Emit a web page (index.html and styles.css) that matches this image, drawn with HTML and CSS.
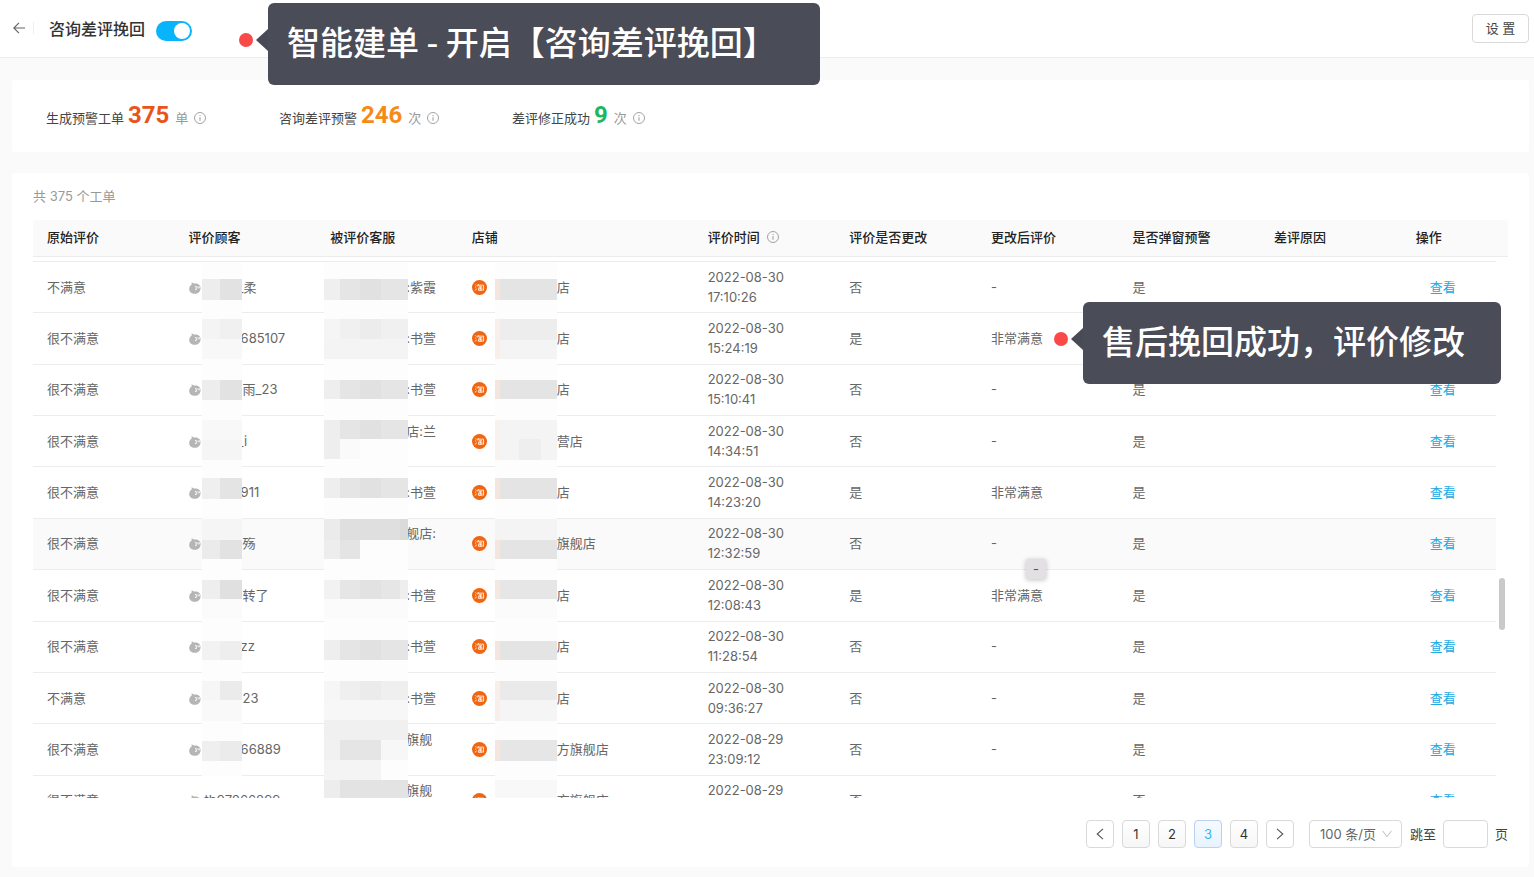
FILE: index.html
```html
<!DOCTYPE html>
<html lang="zh-CN">
<head>
<meta charset="utf-8">
<title>咨询差评挽回</title>
<link rel="stylesheet" href="styles.css">
</head>
<body>
<svg class="defs" aria-hidden="true">
  <symbol id="info" viewBox="0 0 12 12"><circle cx="6" cy="6" r="5.5" fill="none" stroke="currentColor" stroke-width=".9"/><path d="M6 5.2v3.600M6 3v1.100" stroke="currentColor" stroke-width="1"/></symbol>
  <symbol id="ww" viewBox="0 0 12 12"><path d="M2.600.2 5 1.600c3.200-.8 6.600 1 6.600 4.300 0 3.600-2.600 5.800-5.800 5.800C2.500 11.700.2 9.600.2 6.900c0-2 1.100-3.600 2.500-4.300z" fill="#b5b5b5"/><path d="M6 4.600h1.300v2.900H6M9.100 4.300v2M10.700 4.300v2" fill="none" stroke="#fff" stroke-width=".9"/></symbol>
  <symbol id="tao" viewBox="0 0 14 14"><circle cx="7" cy="7" r="7" fill="#f0650f"/><path d="M3.200 4.300l1 .7M2.900 6.300l1 .7M3 9.800l1.100-1.700M6 3.800L5 6M5.600 4.800h5.200v4.700h-1.100M6.300 6.300h3.200M5.600 7.600h4M7.700 6.300v3.100M6 8.200v1.400h3.200V8.200" fill="none" stroke="#fff" stroke-width=".8"/></symbol>
</svg>
<div class="page">
  <header class="topbar">
    <button class="back" type="button" aria-label="返回"><svg width="12" height="12" viewBox="0 0 12 12"><path d="M12 6H1M6 .8.8 6 6 11.200" fill="none" stroke="#666" stroke-width="1.200"/></svg></button>
    <h1>咨询差评挽回</h1>
    <input class="switch" type="checkbox" checked aria-label="咨询差评挽回">
    <button class="settings" type="button">设 置</button>
  </header>
  <main>
    <section class="card stats">
      <div class="stat"><span>生成预警工单</span><strong class="red">375</strong><small>单</small><svg class="info"><use href="#info"/></svg></div>
      <div class="stat"><span>咨询差评预警</span><strong class="orange">246</strong><small>次</small><svg class="info"><use href="#info"/></svg></div>
      <div class="stat"><span>差评修正成功</span><strong class="green">9</strong><small>次</small><svg class="info"><use href="#info"/></svg></div>
    </section>
    <section class="card list">
      <p class="total">共 375 个工单</p>
      <div class="head">
        <table>
          <colgroup><col><col><col><col class="wide"><col><col><col><col><col><col class="last"></colgroup>
          <thead><tr><th>原始评价</th><th>评价顾客</th><th>被评价客服</th><th>店铺</th><th>评价时间<svg class="info"><use href="#info"/></svg></th><th>评价是否更改</th><th>更改后评价</th><th>是否弹窗预警</th><th>差评原因</th><th>操作</th></tr></thead>
        </table>
      </div>
      <div class="body">
        <div class="clip">
        <table>
          <colgroup><col><col><col><col class="wide"><col><col><col><col><col><col class="last"></colgroup>
          <tbody>
          <tr><td>不满意</td>
            <td class="user"><svg class="ww"><use href="#ww"/></svg><span class="less">_柔</span><svg class="mask"><rect y="17" width="18" height="21" fill="#ededed"/><rect x="18" y="17" width="22" height="21" fill="#e2e2e2"/></svg></td>
            <td class="agent"><span>:紫霞</span><svg class="mask"><rect y="17" width="84" height="21" fill="#e5e5e5"/><rect y="17" width="16" height="21" fill="#efefef"/><rect x="36" y="17" width="21" height="21" fill="#e1e1e1"/></svg></td>
            <td class="shop"><svg class="tao"><use href="#tao"/></svg><span>店</span><svg class="mask"><rect y="17" width="62" height="21" fill="#e4e4e4"/><rect y="17" width="5" height="21" fill="#f4e5de"/></svg></td>
            <td>2022-08-30<br>17:10:26</td><td>否</td><td>-</td><td>是</td><td></td><td><a href="#">查看</a></td></tr>
          <tr><td>很不满意</td>
            <td class="user"><svg class="ww"><use href="#ww"/></svg><span>685107</span><svg class="mask"><rect y="6" width="18" height="20" fill="#f4f4f4"/><rect x="18" y="6" width="22" height="20" fill="#f0f0f0"/><rect y="26" width="40" height="20" fill="#f8f8f8"/></svg></td>
            <td class="agent"><span>:书萱</span><svg class="mask"><rect y="6" width="84" height="20" fill="#f0f0f0"/><rect y="6" width="16" height="20" fill="#f5f5f5"/><rect x="36" y="6" width="21" height="20" fill="#ececec"/><rect y="26" width="84" height="20" fill="#f4f4f4"/></svg></td>
            <td class="shop"><svg class="tao"><use href="#tao"/></svg><span>店</span><svg class="mask"><rect y="6" width="62" height="21" fill="#ededed"/><rect y="27" width="62" height="19" fill="#f4f4f4"/><rect y="6" width="5" height="40" fill="#f8efeb"/></svg></td>
            <td>2022-08-30<br>15:24:19</td><td>是</td><td>非常满意</td><td>是</td><td></td><td><a href="#">查看</a></td></tr>
          <tr><td>很不满意</td>
            <td class="user"><svg class="ww"><use href="#ww"/></svg><span class="more">雨_23</span><svg class="mask"><rect y="15" width="18" height="20" fill="#ededed"/><rect x="18" y="15" width="22" height="20" fill="#e2e2e2"/></svg></td>
            <td class="agent"><span>:书萱</span><svg class="mask"><rect y="15" width="84" height="19" fill="#e5e5e5"/><rect y="15" width="16" height="19" fill="#eee"/><rect x="36" y="15" width="21" height="19" fill="#e1e1e1"/></svg></td>
            <td class="shop"><svg class="tao"><use href="#tao"/></svg><span>店</span><svg class="mask"><rect y="15" width="62" height="19" fill="#e4e4e4"/><rect y="15" width="5" height="19" fill="#f4e5de"/></svg></td>
            <td>2022-08-30<br>15:10:41</td><td>否</td><td>-</td><td>是</td><td></td><td><a href="#">查看</a></td></tr>
          <tr><td>很不满意</td>
            <td class="user"><svg class="ww"><use href="#ww"/></svg><span class="less">_i</span><svg class="mask"><rect y="4" width="40" height="20" fill="#f8f8f8"/><rect y="24" width="40" height="20" fill="#f5f5f5"/></svg></td>
            <td class="agent"><span>店:兰<br>&nbsp;</span><svg class="mask"><rect y="4" width="84" height="19" fill="#e5e5e5"/><rect y="4" width="16" height="19" fill="#eee"/><rect x="36" y="4" width="21" height="19" fill="#e1e1e1"/><rect y="23" width="16" height="20" fill="#eee"/><rect x="16" y="23" width="20" height="20" fill="#fafafa"/></svg></td>
            <td class="shop"><svg class="tao"><use href="#tao"/></svg><span>营店</span><svg class="mask"><rect y="4" width="62" height="40" fill="#f4f4f4"/><rect x="24" y="23" width="22" height="21" fill="#eee"/><rect y="4" width="5" height="40" fill="#f9f1ee"/></svg></td>
            <td>2022-08-30<br>14:34:51</td><td>否</td><td>-</td><td>是</td><td></td><td><a href="#">查看</a></td></tr>
          <tr><td>很不满意</td>
            <td class="user"><svg class="ww"><use href="#ww"/></svg><span>911</span><svg class="mask"><rect y="11" width="18" height="21" fill="#efefef"/><rect x="18" y="11" width="22" height="21" fill="#e4e4e4"/></svg></td>
            <td class="agent"><span>:书萱</span><svg class="mask"><rect y="11" width="84" height="20" fill="#e5e5e5"/><rect y="11" width="16" height="20" fill="#eee"/><rect x="36" y="11" width="21" height="20" fill="#e1e1e1"/></svg></td>
            <td class="shop"><svg class="tao"><use href="#tao"/></svg><span>店</span><svg class="mask"><rect y="11" width="62" height="21" fill="#e4e4e4"/><rect y="11" width="5" height="21" fill="#f4e5de"/></svg></td>
            <td>2022-08-30<br>14:23:20</td><td>是</td><td>非常满意</td><td>是</td><td></td><td><a href="#">查看</a></td></tr>
          <tr class="hover"><td>很不满意</td>
            <td class="user"><svg class="ww"><use href="#ww"/></svg><span class="more">殇</span><svg class="mask"><rect y="0" width="40" height="21" fill="#f5f5f5"/><rect y="21" width="18" height="19" fill="#ebebeb"/><rect x="18" y="21" width="22" height="19" fill="#e2e2e2"/></svg></td>
            <td class="agent"><span>舰店:<br>&nbsp;</span><svg class="mask"><rect y="0" width="84" height="21" fill="#dfdfdf"/><rect y="0" width="16" height="21" fill="#ebebeb"/><rect x="76" y="0" width="8" height="21" fill="#dadada"/><rect y="21" width="16" height="19" fill="#ededed"/><rect x="16" y="21" width="20" height="19" fill="#e4e4e4"/></svg></td>
            <td class="shop"><svg class="tao"><use href="#tao"/></svg><span>旗舰店</span><svg class="mask"><rect y="0" width="62" height="21" fill="#f4f4f4"/><rect y="21" width="62" height="19" fill="#e4e4e4"/><rect y="21" width="5" height="19" fill="#f4e5de"/></svg></td>
            <td>2022-08-30<br>12:32:59</td><td>否</td><td>-</td><td>是</td><td></td><td><a href="#">查看</a></td></tr>
          <tr><td>很不满意</td>
            <td class="user"><svg class="ww"><use href="#ww"/></svg><span class="more">转了</span><svg class="mask"><rect y="10" width="18" height="19" fill="#eee"/><rect x="18" y="10" width="22" height="19" fill="#e0e0e0"/><rect y="29" width="40" height="20" fill="#fbfbfb"/></svg></td>
            <td class="agent"><span>:书萱</span><svg class="mask"><rect y="10" width="84" height="19" fill="#e6e6e6"/><rect y="10" width="16" height="19" fill="#f2f2f2"/><rect x="36" y="10" width="21" height="19" fill="#e2e2e2"/><rect x="76" y="10" width="8" height="19" fill="#eee"/><rect y="29" width="84" height="20" fill="#fbfbfb"/></svg></td>
            <td class="shop"><svg class="tao"><use href="#tao"/></svg><span>店</span><svg class="mask"><rect y="10" width="62" height="19" fill="#e6e6e6"/><rect y="10" width="5" height="19" fill="#f4e8e2"/><rect y="29" width="62" height="20" fill="#fbfbfb"/></svg></td>
            <td>2022-08-30<br>12:08:43</td><td>是</td><td>非常满意</td><td>是</td><td></td><td><a href="#">查看</a></td></tr>
          <tr><td>很不满意</td>
            <td class="user"><svg class="ww"><use href="#ww"/></svg><span>zz</span><svg class="mask"><rect y="19" width="18" height="19" fill="#f2f2f2"/><rect x="18" y="19" width="22" height="19" fill="#eee"/></svg></td>
            <td class="agent"><span>:书萱</span><svg class="mask"><rect y="18" width="84" height="20" fill="#e5e5e5"/><rect y="18" width="16" height="20" fill="#eee"/><rect x="36" y="18" width="21" height="20" fill="#e1e1e1"/></svg></td>
            <td class="shop"><svg class="tao"><use href="#tao"/></svg><span>店</span><svg class="mask"><rect y="19" width="62" height="19" fill="#e4e4e4"/><rect y="19" width="5" height="19" fill="#f4e5de"/></svg></td>
            <td>2022-08-30<br>11:28:54</td><td>否</td><td>-</td><td>是</td><td></td><td><a href="#">查看</a></td></tr>
          <tr><td>不满意</td>
            <td class="user"><svg class="ww"><use href="#ww"/></svg><span class="more">23</span><svg class="mask"><rect y="8" width="18" height="19" fill="#f6f6f6"/><rect x="18" y="8" width="22" height="19" fill="#ebebeb"/><rect y="27" width="40" height="21" fill="#f9f9f9"/></svg></td>
            <td class="agent"><span>:书萱</span><svg class="mask"><rect y="8" width="84" height="19" fill="#efefef"/><rect y="8" width="16" height="19" fill="#f6f6f6"/><rect x="36" y="8" width="21" height="19" fill="#ebebeb"/><rect y="27" width="84" height="20" fill="#f7f7f7"/><rect y="47" width="84" height="5" fill="#f0f0f0"/></svg></td>
            <td class="shop"><svg class="tao"><use href="#tao"/></svg><span>店</span><svg class="mask"><rect y="8" width="62" height="19" fill="#eaeaea"/><rect y="27" width="62" height="21" fill="#f5f5f5"/><rect y="8" width="5" height="40" fill="#f8eeea"/></svg></td>
            <td>2022-08-30<br>09:36:27</td><td>否</td><td>-</td><td>是</td><td></td><td><a href="#">查看</a></td></tr>
          <tr><td>很不满意</td>
            <td class="user"><svg class="ww"><use href="#ww"/></svg><span>66889</span><svg class="mask"><rect y="17" width="18" height="20" fill="#efefef"/><rect x="18" y="17" width="22" height="20" fill="#ebebeb"/></svg></td>
            <td class="agent"><span>旗舰<br>&nbsp;</span><svg class="mask"><rect y="0" width="84" height="16" fill="#f0f0f0"/><rect y="16" width="84" height="20" fill="#f7f7f7"/><rect y="16" width="57" height="20" fill="#e5e5e5"/><rect y="16" width="16" height="20" fill="#f1f1f1"/><rect y="36" width="57" height="16" fill="#f4f4f4"/></svg></td>
            <td class="shop"><svg class="tao"><use href="#tao"/></svg><span>方旗舰店</span><svg class="mask"><rect y="16" width="62" height="21" fill="#e6e6e6"/><rect y="16" width="5" height="21" fill="#f4e5de"/></svg></td>
            <td>2022-08-29<br>23:09:12</td><td>否</td><td>-</td><td>是</td><td></td><td><a href="#">查看</a></td></tr>
          <tr><td>很不满意</td>
            <td class="user"><svg class="ww"><use href="#ww"/></svg><span class="open">tb97066899</span></td>
            <td class="agent"><span>旗舰<br>&nbsp;</span><svg class="mask"><rect y="0" width="57" height="4" fill="#f4f4f4"/><rect y="4" width="84" height="20" fill="#e3e3e3"/><rect y="4" width="16" height="20" fill="#ededed"/></svg></td>
            <td class="shop"><svg class="tao"><use href="#tao"/></svg><span>方旗舰店</span><svg class="mask"><rect y="4" width="62" height="20" fill="#f8f8f8"/></svg></td>
            <td>2022-08-29<br>&nbsp;</td><td>否</td><td></td><td>否</td><td></td><td><a href="#">查看</a></td></tr>
          </tbody>
        </table>
        </div>
        <div class="thumb"></div>
      </div>
      <nav class="pager" aria-label="分页">
        <button type="button" aria-label="上一页"><svg width="8" height="12" viewBox="0 0 8 12"><path d="M7 .8 1.200 6 7 11.200" fill="none" stroke="#555" stroke-width="1.100"/></svg></button>
        <button type="button" class="num">1</button>
        <button type="button" class="num">2</button>
        <button type="button" class="num current" aria-current="page">3</button>
        <button type="button" class="num">4</button>
        <button type="button" aria-label="下一页"><svg width="8" height="12" viewBox="0 0 8 12"><path d="m1 .8 5.800 5.200L1 11.200" fill="none" stroke="#555" stroke-width="1.100"/></svg></button>
        <div class="size"><select aria-label="每页条数"><option>100 条/页</option></select><svg width="10" height="8" viewBox="0 0 10 8"><path d="m.6.8 4.400 6 4.400-6" fill="none" stroke="#bbb"/></svg></div>
        <div class="jump"><label for="jump">跳至</label><input id="jump" type="text"><span>页</span></div>
      </nav>
    </section>
  </main>
  <div class="hint">-</div>
  <div class="callout first"><i class="dot"></i><i class="arrow"></i><p>智能建单 - 开启【咨询差评挽回】</p></div>
  <div class="callout second"><i class="dot"></i><i class="arrow"></i><p>售后挽回成功，评价修改</p></div>
</div>
</body>
</html>
```

FILE: styles.css
```css
* { box-sizing: border-box; }
body, h1, p { margin: 0; }
body {
  background: #fafafa;
  color: #666;
  font: 13px/20px Inter, "Noto Sans CJK SC", sans-serif;
}
button, input, select { font: inherit; color: inherit; margin: 0; }
.defs { position: absolute; width: 0; height: 0; }
.page {
  position: relative;
  display: flex;
  flex-direction: column;
  height: 100vh;
  overflow: hidden;
}

/* top bar */
.topbar {
  display: flex;
  align-items: center;
  height: 58px;
  padding: 0 5px 0 13px;
  background: #fff;
  border-bottom: 1px solid #ececec;
}
.back {
  display: flex;
  align-items: center;
  width: 21px;
  height: 12px;
  margin-bottom: 2px;
  padding: 0;
  border: 0;
  border-right: 1px solid #eee;
  background: none;
}
h1 {
  margin: 0 11px 0 15px;
  color: #333;
  font-size: 16px;
  font-weight: 500;
  line-height: 24px;
}
.switch {
  appearance: none;
  width: 36px;
  height: 20px;
  margin-top: 4px;
  padding: 2px;
  border-radius: 10px;
  background: #08b4fb;
}
.switch::before {
  content: "";
  display: block;
  width: 16px;
  height: 16px;
  margin-left: auto;
  border-radius: 50%;
  background: #fff;
}
.settings {
  width: 57px;
  height: 29px;
  margin-left: auto;
  padding: 0 0 2px;
  border: 1px solid #d9d9d9;
  border-radius: 4px;
  background: #fff;
  color: #444;
}

/* cards */
main {
  display: flex;
  flex: 1;
  flex-direction: column;
  gap: 21px;
  min-height: 0;
  padding: 22px 5px 10px 12px;
}
.card { background: #fff; border-radius: 3px; }
.stats { display: flex; padding: 19px 34px 21px; }
.stat {
  display: flex;
  align-items: baseline;
  width: 233px;
  height: 32px;
  color: #444;
  line-height: 32px;
}
.stat strong {
  margin: 0 6px 0 4px;
  font: bold 24px/32px Roboto, sans-serif;
}
.stat small { color: #999; font-size: 13px; }
.info { width: 12px; height: 12px; color: #999; }
.stat .info { align-self: center; margin: 6px 0 0 6px; }
.red { color: #e9541a; }
.orange { color: #f58b16; }
.green { color: #1db75f; }

/* list */
.list {
  display: flex;
  flex: 1;
  flex-direction: column;
  min-height: 0;
  padding: 13px 21px 19px;
}
.total { padding-bottom: 14px; color: #999; }
.head {
  padding-right: 12px;
  background: #fafafa;
  border-bottom: 1px solid #ececec;
  border-radius: 3px 3px 0 0;
}
table { width: 100%; table-layout: fixed; border-spacing: 0; }
col { width: 9.68%; }
.wide { width: 16.12%; }
.last { width: 6.44%; }
th, td { padding: 0 0 1px 14px; text-align: left; white-space: nowrap; }
th { height: 36px; padding-bottom: 2px; color: #222; font-weight: 500; }
th .info { margin-left: 7px; vertical-align: -1px; }
.body { position: relative; flex: 1; min-height: 0; }
.clip { height: 100%; overflow: hidden; padding: 4px 12px 0 0; }
.clip table { height: 566px; border-top: 1px solid #ececec; }
td { position: relative; border-bottom: 1px solid #ececec; }
.hover td { background: #fafafa; }
a { margin-left: 14px; color: #20a9e4; text-decoration: none; }
.ww { width: 12px; height: 12px; vertical-align: -2px; }
.tao { width: 15px; height: 15px; vertical-align: -3px; }
.user span { margin-left: 40px; }
.user .more { margin-left: 42px; }
.user .less { margin-left: 37px; }
.user .open { margin-left: 4px; }
.agent span { display: block; margin-left: 76px; }
.shop span { margin-left: 70px; }
.mask {
  position: absolute;
  top: 0;
  left: 27px;
  z-index: 1;
  width: 40px;
  height: calc(100% + 1px);
  background: #fdfdfd;
}
.agent .mask { left: 8px; width: 84px; }
.shop .mask { left: 37px; width: 62px; }
.thumb {
  position: absolute;
  top: 321px;
  right: 3px;
  width: 6px;
  height: 52px;
  border-radius: 3px;
  background: #c9c9c9;
}

/* pagination */
.pager {
  display: flex;
  align-items: center;
  justify-content: flex-end;
  gap: 8px;
  padding-top: 22px;
  color: #444;
}
.pager button {
  display: grid;
  place-items: center;
  width: 28px;
  height: 28px;
  padding: 0;
  border: 1px solid #d9d9d9;
  border-radius: 4px;
  background: #fff;
}
.pager .num { background: linear-gradient(#fff, #f6f6f6); color: #333; }
.pager .current {
  border-color: #b9d0ee;
  background: linear-gradient(#f6faff, #e8f3fe);
  color: #35b8ee;
}
.size { position: relative; margin-left: 7px; }
.size select {
  appearance: none;
  display: block;
  width: 93px;
  height: 28px;
  padding: 0 10px;
  border: 1px solid #d9d9d9;
  border-radius: 4px;
  background: #fff;
  color: #666;
}
.size svg { position: absolute; top: 10px; right: 10px; }
.jump { display: flex; align-items: center; gap: 7px; }
.pager input {
  width: 45px;
  height: 28px;
  border: 1px solid #d9d9d9;
  border-radius: 4px;
  background: #fff;
}

/* floating notes */
.hint {
  position: absolute;
  top: 559px;
  left: 1026px;
  width: 20px;
  border-radius: 2px;
  background: #e2e0e2;
  box-shadow: 0 1px 5px rgba(0, 0, 0, .25);
  color: #555;
  text-align: center;
}
.callout {
  position: absolute;
  z-index: 2;
  height: 82px;
  padding-left: 19px;
  border-radius: 6px;
  background: rgba(70, 72, 84, .98);
  color: #fff;
  font: 500 33px/76px "Noto Sans CJK SC", sans-serif;
  white-space: nowrap;
}
.first { top: 3px; left: 268px; width: 552px; }
.second { top: 302px; left: 1083px; width: 418px; }
.dot {
  position: absolute;
  top: 30px;
  left: -29px;
  width: 14px;
  height: 14px;
  border-radius: 50%;
  background: #f94a47;
}
.arrow {
  position: absolute;
  top: 26px;
  left: -12px;
  border: solid transparent;
  border-width: 11px 12px 11px 0;
  border-right-color: #484a56;
}
```
